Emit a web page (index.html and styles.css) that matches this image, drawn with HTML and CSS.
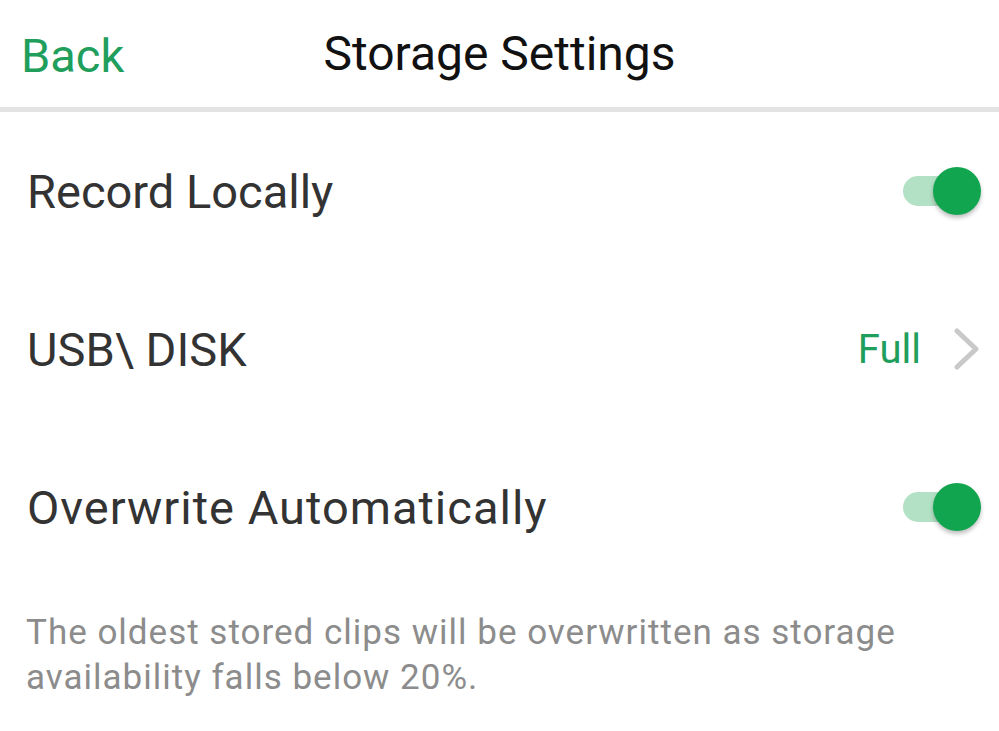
FILE: index.html
```html
<!DOCTYPE html>
<html>
<head>
<meta charset="utf-8">
<link rel="stylesheet" href="styles.css">
</head>
<body>
<header class="topbar">
  <span class="back">Back</span>
  <span class="title">Storage Settings</span>
</header>
<main class="list">
  <div class="row">
    <span class="label">Record Locally</span>
    <span class="switch on"><span class="track"></span><span class="thumb"></span></span>
  </div>
  <div class="row">
    <span class="label">USB\ DISK</span>
    <span class="value">Full
      <svg class="chev" width="28" height="42" viewBox="0 0 28 42"><path d="M4 3 L23 21 L4 39" fill="none" stroke="#c9c9c9" stroke-width="5" stroke-linecap="round" stroke-linejoin="round"/></svg>
    </span>
  </div>
  <div class="row">
    <span class="label wide">Overwrite Automatically</span>
    <span class="switch on"><span class="track"></span><span class="thumb"></span></span>
  </div>
  <p class="note">The oldest stored clips will be overwritten as storage availability falls below 20%.</p>
</main>
</body>
</html>
```
FILE: styles.css
```css
html, body {
  margin: 0;
  padding: 0;
  background: #ffffff;
}
body {
  width: 999px;
  height: 731px;
  overflow: hidden;
  font-family: Roboto, "Noto Sans", sans-serif;
}
.topbar {
  position: relative;
  height: 107px;
  border-bottom: 5px solid #e3e3e3;
  display: flex;
  align-items: center;
  justify-content: center;
}
.back {
  position: absolute;
  left: 21px;
  top: 28px;
  font-size: 47px;
  line-height: 56px;
  color: #1f9e5c;
}
.title {
  font-size: 48px;
  line-height: 56px;
  color: #111111;
}
.list {
  display: flex;
  flex-direction: column;
}
.row {
  height: 158px;
  display: flex;
  align-items: center;
  justify-content: space-between;
  padding: 0 18px 0 27px;
}
.label {
  font-size: 47px;
  color: #333333;
}
.label.wide {
  letter-spacing: 1px;
}
.value {
  display: flex;
  align-items: center;
  gap: 32px;
  font-size: 40px;
  color: #1f9e5c;
}
.chev {
  display: block;
}
.switch {
  position: relative;
  width: 78px;
  height: 48px;
  display: block;
}
.track {
  position: absolute;
  left: 0;
  top: 9px;
  width: 66px;
  height: 30px;
  border-radius: 15px;
  background: #b3e1c5;
}
.thumb {
  position: absolute;
  right: 0;
  top: 0;
  width: 48px;
  height: 48px;
  border-radius: 50%;
  background: #12a550;
  box-shadow: 0 3px 4px rgba(0, 0, 0, 0.25);
}
.note {
  margin: 0;
  padding: 24px 60px 0 26px;
  font-size: 35px;
  line-height: 45px;
  letter-spacing: 1px;
  color: #8c8c8c;
}
```
